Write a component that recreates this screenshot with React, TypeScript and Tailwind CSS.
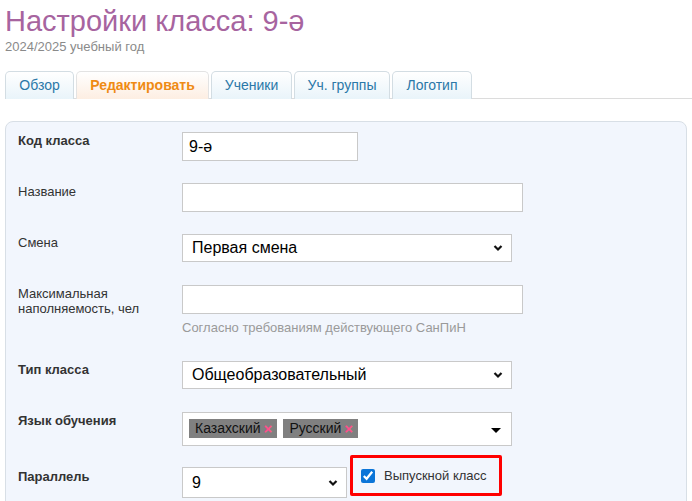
import { ReactNode } from "react";

const tabs = [
  { name: "Обзор", w: "w-[69px]" },
  { name: "Редактировать", w: "w-[133px]", active: true },
  { name: "Ученики", w: "w-[81px]" },
  { name: "Уч. группы", w: "w-[96px]" },
  { name: "Логотип", w: "w-[80px]" },
];

function Chevron() {
  return (
    <svg width="10" height="7" viewBox="0 0 10 7" className="absolute right-[8px] top-1/2 -translate-y-1/2">
      <path d="M1.5 1.5 L5 5 L8.5 1.5" fill="none" stroke="#111" strokeWidth="2.2" />
    </svg>
  );
}

function Row({ label, bold, children, className = "" }: { label: ReactNode; bold?: boolean; children: ReactNode; className?: string }) {
  return (
    <div className={`flex items-start ${className}`}>
      <div className={`w-[176px] shrink-0 pl-[12px] pt-[1px] text-[13px] leading-[15px] text-[#333] ${bold ? "font-bold" : ""}`}>
        {label}
      </div>
      <div className="flex-1">{children}</div>
    </div>
  );
}

function Select({ value, w, h = "h-[28px]" }: { value: string; w: string; h?: string }) {
  return (
    <div className={`relative ${w} ${h} bg-white border border-[#c9c9c9] flex items-center pl-[9px] text-[16px] text-black`}>
      {value}
      <Chevron />
    </div>
  );
}

export default function App() {
  return (
    <div className="w-[692px] h-[501px] overflow-hidden bg-white pl-[5px] font-['Liberation_Sans',Arial,sans-serif]">
      {/* заголовок */}
      <h1 className="text-[29px] leading-[34px] pt-[4px] text-[#a7649f]">Настройки класса: 9-ә</h1>
      <div className="mt-[1px] text-[13px] leading-[15px] text-[#8a8a8a]">2024/2025 учебный год</div>

      {/* вкладки */}
      <div className="mt-[17px] flex gap-[2px] border-b border-[#dcdcdc] h-[28px]">
        {tabs.map((t) => (
          <div
            key={t.name}
            className={`${t.w} h-[28px] flex items-center justify-center rounded-t-[5px] border border-b-0 text-[14px] ${
              t.active
                ? "bg-gradient-to-b from-white to-[#fdeee2] border-[#e3e3e3] font-bold text-[#ef8b14]"
                : "bg-gradient-to-b from-white to-[#e9f4fa] border-[#d3dde3] text-[#2b78a8]"
            }`}
          >
            {t.name}
          </div>
        ))}
      </div>

      {/* форма */}
      <div className="mt-[22px] mr-[5px] rounded-t-[8px] border border-[#d8dfe6] bg-[#f2f6fd] pt-[10px] h-[400px]">
        <Row label="Код класса" bold>
          <div className="w-[176px] h-[29px] bg-white border border-[#c9c9c9] flex items-center pl-[6px] text-[16px] text-black">9-ә</div>
        </Row>
        <Row label="Название" className="mt-[22px]">
          <div className="w-[341px] h-[29px] bg-white border border-[#c9c9c9]" />
        </Row>
        <Row label="Смена" className="mt-[22px]">
          <Select value="Первая смена" w="w-[330px]" />
        </Row>
        <Row label={<>Максимальная<br />наполняемость, чел</>} className="mt-[23px]">
          <div className="w-[341px] h-[29px] bg-white border border-[#c9c9c9]" />
          <div className="mt-[6px] text-[13px] leading-[15px] text-[#9a9a9a]">Согласно требованиям действующего СанПиН</div>
        </Row>
        <Row label="Тип класса" bold className="mt-[26px]">
          <Select value="Общеобразовательный" w="w-[330px]" />
        </Row>
        <Row label="Язык обучения" bold className="mt-[23px]">
          <div className="relative w-[330px] h-[34px] bg-white border border-[#c9c9c9] flex items-start pt-[6px] pl-[6px] gap-[6px]">
            {["Казахский", "Русский"].map((l) => (
              <span key={l} className="h-[19px] bg-[#808080] pl-[6px] pr-[5px] flex items-center gap-[3px] text-[14px] text-[#111]">
                {l}
                <span className="text-[#ff4f8b] text-[15px] font-bold leading-none">×</span>
              </span>
            ))}
            <span className="absolute right-[10px] top-[15px] w-0 h-0 border-l-[5px] border-r-[5px] border-t-[5px] border-l-transparent border-r-transparent border-t-black" />
          </div>
        </Row>
        <div className="flex items-start mt-[9px]">
          <div className="w-[176px] shrink-0 pl-[12px] pt-[14px] text-[13px] leading-[15px] text-[#333] font-bold">Параллель</div>
          <div className="flex items-start gap-[3px]">
            <div className="mt-[12px]">
              <Select value="9" w="w-[165px]" h="h-[31px]" />
            </div>
            <div className="w-[152px] h-[41px] border-[3px] border-[#ff0000] rounded-[2px] flex items-center pl-[8px] gap-[9px]">
              <input type="checkbox" defaultChecked className="w-[14px] h-[14px] accent-[#0b75d8]" />
              <span className="text-[13px] text-[#333]">Выпускной класс</span>
            </div>
          </div>
        </div>
      </div>
    </div>
  );
}
